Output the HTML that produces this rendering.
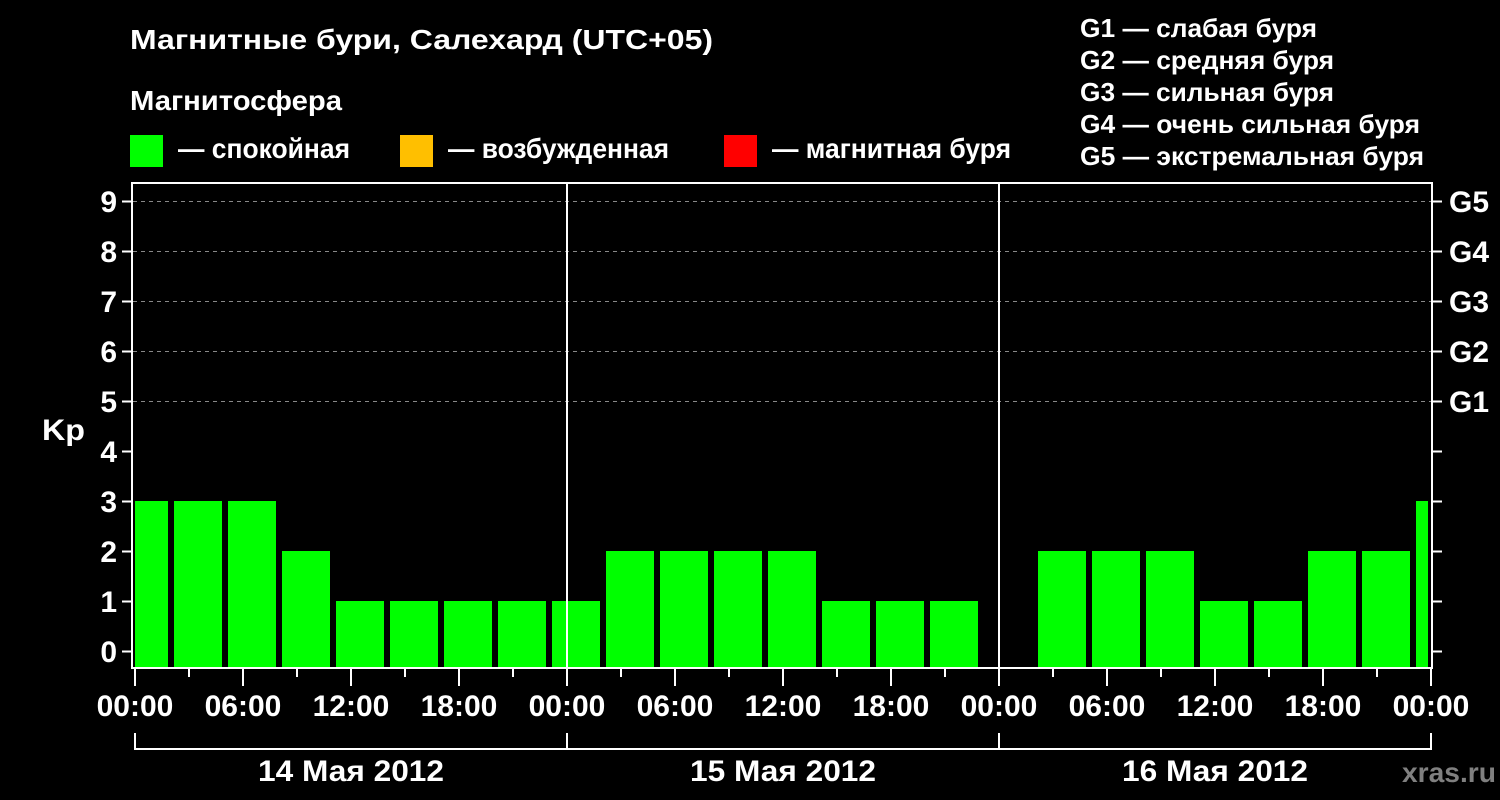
<!DOCTYPE html>
<html><head><meta charset="utf-8"><style>
html,body{margin:0;padding:0;background:#000;}
svg{display:block}
text{font-family:"Liberation Sans",Arial,sans-serif;font-weight:bold;fill:#fff;}
</style></head><body>
<svg width="1500" height="800" viewBox="0 0 1500 800">
<rect width="1500" height="800" fill="#000"/>
<text x="130" y="49" font-size="28" textLength="583" lengthAdjust="spacingAndGlyphs">Магнитные бури, Салехард (UTC+05)</text>
<text x="130" y="110" font-size="28" textLength="212" lengthAdjust="spacingAndGlyphs">Магнитосфера</text>
<rect x="130" y="135" width="33" height="32" fill="#00ff00"/>
<text x="178" y="158" font-size="28" textLength="172" lengthAdjust="spacingAndGlyphs">— спокойная</text>
<rect x="400" y="135" width="33" height="32" fill="#ffbf00"/>
<text x="448" y="158" font-size="28" textLength="221" lengthAdjust="spacingAndGlyphs">— возбужденная</text>
<rect x="724" y="135" width="33" height="32" fill="#ff0000"/>
<text x="772" y="158" font-size="28" textLength="239" lengthAdjust="spacingAndGlyphs">— магнитная буря</text>
<g font-size="26">
<text x="1080" y="37" textLength="237" lengthAdjust="spacingAndGlyphs">G1 — слабая буря</text>
<text x="1080" y="69" textLength="254" lengthAdjust="spacingAndGlyphs">G2 — средняя буря</text>
<text x="1080" y="101" textLength="254" lengthAdjust="spacingAndGlyphs">G3 — сильная буря</text>
<text x="1080" y="133" textLength="340" lengthAdjust="spacingAndGlyphs">G4 — очень сильная буря</text>
<text x="1080" y="165" textLength="344" lengthAdjust="spacingAndGlyphs">G5 — экстремальная буря</text>
</g>
<g stroke="#888" stroke-width="1" stroke-dasharray="4,4">
<line x1="133" y1="201.5" x2="1432" y2="201.5"/>
<line x1="133" y1="251.5" x2="1432" y2="251.5"/>
<line x1="133" y1="301.5" x2="1432" y2="301.5"/>
<line x1="133" y1="351.5" x2="1432" y2="351.5"/>
<line x1="133" y1="401.5" x2="1432" y2="401.5"/>
</g>
<g fill="#00ff00">
<rect x="135" y="501" width="33" height="167"/>
<rect x="174" y="501" width="48" height="167"/>
<rect x="228" y="501" width="48" height="167"/>
<rect x="282" y="551" width="48" height="117"/>
<rect x="336" y="601" width="48" height="67"/>
<rect x="390" y="601" width="48" height="67"/>
<rect x="444" y="601" width="48" height="67"/>
<rect x="498" y="601" width="48" height="67"/>
<rect x="552" y="601" width="48" height="67"/>
<rect x="606" y="551" width="48" height="117"/>
<rect x="660" y="551" width="48" height="117"/>
<rect x="714" y="551" width="48" height="117"/>
<rect x="768" y="551" width="48" height="117"/>
<rect x="822" y="601" width="48" height="67"/>
<rect x="876" y="601" width="48" height="67"/>
<rect x="930" y="601" width="48" height="67"/>
<rect x="1038" y="551" width="48" height="117"/>
<rect x="1092" y="551" width="48" height="117"/>
<rect x="1146" y="551" width="48" height="117"/>
<rect x="1200" y="601" width="48" height="67"/>
<rect x="1254" y="601" width="48" height="67"/>
<rect x="1308" y="551" width="48" height="117"/>
<rect x="1362" y="551" width="48" height="117"/>
<rect x="1416" y="501" width="12" height="167"/>
</g>
<g stroke="#fff" stroke-width="2" fill="none">
<rect x="132" y="183" width="1300" height="485"/>
<line x1="567" y1="182" x2="567" y2="668"/>
<line x1="999" y1="182" x2="999" y2="668"/>
</g>
<g stroke="#fff" stroke-width="2">
<line x1="122" y1="201.5" x2="132" y2="201.5"/><line x1="122" y1="251.5" x2="132" y2="251.5"/>
<line x1="122" y1="301.5" x2="132" y2="301.5"/><line x1="122" y1="351.5" x2="132" y2="351.5"/>
<line x1="122" y1="401.5" x2="132" y2="401.5"/><line x1="122" y1="451.5" x2="132" y2="451.5"/>
<line x1="122" y1="501.5" x2="132" y2="501.5"/><line x1="122" y1="551.5" x2="132" y2="551.5"/>
<line x1="122" y1="601.5" x2="132" y2="601.5"/><line x1="122" y1="651.5" x2="132" y2="651.5"/>
<line x1="1432" y1="201.5" x2="1442" y2="201.5"/><line x1="1432" y1="251.5" x2="1442" y2="251.5"/>
<line x1="1432" y1="301.5" x2="1442" y2="301.5"/><line x1="1432" y1="351.5" x2="1442" y2="351.5"/>
<line x1="1432" y1="401.5" x2="1442" y2="401.5"/><line x1="1432" y1="451.5" x2="1442" y2="451.5"/>
<line x1="1432" y1="501.5" x2="1442" y2="501.5"/><line x1="1432" y1="551.5" x2="1442" y2="551.5"/>
<line x1="1432" y1="601.5" x2="1442" y2="601.5"/><line x1="1432" y1="651.5" x2="1442" y2="651.5"/>
</g>
<g font-size="30" text-anchor="end">
<text x="117" y="212">9</text><text x="117" y="262">8</text><text x="117" y="312">7</text>
<text x="117" y="362">6</text><text x="117" y="412">5</text><text x="117" y="462">4</text>
<text x="117" y="512">3</text><text x="117" y="562">2</text><text x="117" y="612">1</text>
<text x="117" y="662">0</text>
</g>
<text x="42" y="440" font-size="30" textLength="43" lengthAdjust="spacingAndGlyphs">Kp</text>
<g font-size="30">
<text x="1449" y="212">G5</text><text x="1449" y="262">G4</text><text x="1449" y="312">G3</text>
<text x="1449" y="362">G2</text><text x="1449" y="412">G1</text>
</g>
<g stroke="#fff" stroke-width="2">
<line x1="135" y1="668" x2="135" y2="686"/><line x1="189" y1="668" x2="189" y2="677"/>
<line x1="243" y1="668" x2="243" y2="686"/><line x1="297" y1="668" x2="297" y2="677"/>
<line x1="351" y1="668" x2="351" y2="686"/><line x1="405" y1="668" x2="405" y2="677"/>
<line x1="459" y1="668" x2="459" y2="686"/><line x1="513" y1="668" x2="513" y2="677"/>
<line x1="567" y1="668" x2="567" y2="686"/><line x1="621" y1="668" x2="621" y2="677"/>
<line x1="675" y1="668" x2="675" y2="686"/><line x1="729" y1="668" x2="729" y2="677"/>
<line x1="783" y1="668" x2="783" y2="686"/><line x1="837" y1="668" x2="837" y2="677"/>
<line x1="891" y1="668" x2="891" y2="686"/><line x1="945" y1="668" x2="945" y2="677"/>
<line x1="999" y1="668" x2="999" y2="686"/><line x1="1053" y1="668" x2="1053" y2="677"/>
<line x1="1107" y1="668" x2="1107" y2="686"/><line x1="1161" y1="668" x2="1161" y2="677"/>
<line x1="1215" y1="668" x2="1215" y2="686"/><line x1="1269" y1="668" x2="1269" y2="677"/>
<line x1="1323" y1="668" x2="1323" y2="686"/><line x1="1377" y1="668" x2="1377" y2="677"/>
<line x1="1431" y1="668" x2="1431" y2="686"/>
</g>
<g font-size="30" text-anchor="middle">
<text x="135" y="716">00:00</text><text x="243" y="716">06:00</text><text x="351" y="716">12:00</text><text x="459" y="716">18:00</text>
<text x="567" y="716">00:00</text><text x="675" y="716">06:00</text><text x="783" y="716">12:00</text><text x="891" y="716">18:00</text>
<text x="999" y="716">00:00</text><text x="1107" y="716">06:00</text><text x="1215" y="716">12:00</text><text x="1323" y="716">18:00</text>
<text x="1431" y="716">00:00</text>
</g>
<g stroke="#fff" stroke-width="2" fill="none">
<line x1="134" y1="749" x2="1432" y2="749"/>
<line x1="135" y1="733" x2="135" y2="750"/>
<line x1="567" y1="733" x2="567" y2="750"/>
<line x1="999" y1="733" x2="999" y2="750"/>
<line x1="1431" y1="733" x2="1431" y2="750"/>
</g>
<g font-size="30" text-anchor="middle">
<text x="351" y="781" textLength="186" lengthAdjust="spacingAndGlyphs">14 Мая 2012</text>
<text x="783" y="781" textLength="186" lengthAdjust="spacingAndGlyphs">15 Мая 2012</text>
<text x="1215" y="781" textLength="186" lengthAdjust="spacingAndGlyphs">16 Мая 2012</text>
</g>
<text x="1402" y="782" font-size="28" style="fill:#808080" textLength="94" lengthAdjust="spacingAndGlyphs">xras.ru</text>
</svg>
</body></html>
